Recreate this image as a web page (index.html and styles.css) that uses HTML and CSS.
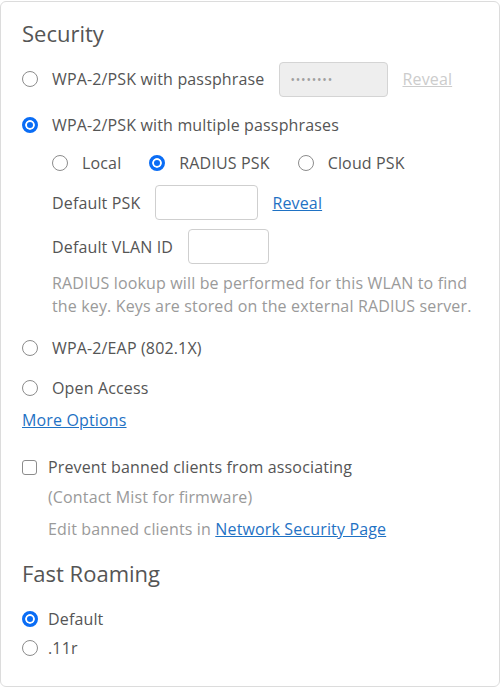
FILE: index.html
```html
<!DOCTYPE html>
<html>
<head>
<meta charset="utf-8">
<link rel="stylesheet" href="styles.css">
</head>
<body>
<div class="panel">
  <h2 class="title">Security</h2>

  <div class="row r1">
    <span class="radio"></span><span class="label">WPA-2/PSK with passphrase</span>
    <span class="input disabled pass">••••••••</span>
    <a class="link off">Reveal</a>
  </div>

  <div class="row r2">
    <span class="radio on"></span><span class="label">WPA-2/PSK with multiple passphrases</span>
  </div>

  <div class="sub">
    <div class="row r3">
      <span class="opt"><span class="radio"></span><span class="label">Local</span></span>
      <span class="opt"><span class="radio on"></span><span class="label">RADIUS PSK</span></span>
      <span class="opt"><span class="radio"></span><span class="label">Cloud PSK</span></span>
    </div>
    <div class="row r4">
      <span class="flabel">Default PSK</span>
      <span class="input psk"></span>
      <a class="link">Reveal</a>
    </div>
    <div class="row r5">
      <span class="flabel">Default VLAN ID</span>
      <span class="input vlan"></span>
    </div>
    <p class="help">RADIUS lookup will be performed for this WLAN to find the key. Keys are stored on the external RADIUS server.</p>
  </div>

  <div class="row r6">
    <span class="radio"></span><span class="label">WPA-2/EAP (802.1X)</span>
  </div>
  <div class="row r7">
    <span class="radio"></span><span class="label">Open Access</span>
  </div>
  <div class="row r8"><a class="link">More Options</a></div>

  <div class="row r9">
    <span class="check"></span><span class="label">Prevent banned clients from associating</span>
  </div>
  <div class="row r10 note">(Contact Mist for firmware)</div>
  <div class="row r11 note">Edit banned clients in&nbsp;<a class="link">Network Security Page</a></div>

  <h2 class="title t2">Fast Roaming</h2>
  <div class="row r12">
    <span class="radio on"></span><span class="label tight">Default</span>
  </div>
  <div class="row r13">
    <span class="radio"></span><span class="label tight">.11r</span>
  </div>
</div>
</body>
</html>
```

FILE: styles.css
```css
html, body {
  margin: 0;
  padding: 0;
  background: #ffffff;
}
body {
  padding-top: 1px;
  font-family: "Open Sans", "Liberation Sans", sans-serif;
  color: #555555;
  font-size: 16px;
  letter-spacing: 0.15px;
}
.panel {
  box-sizing: border-box;
  width: 500px;
  height: 686px;
  border: 1px solid #dcdcdc;
  border-radius: 6px;
  padding: 16px 0 0 21px;
  display: flex;
  flex-direction: column;
}
.title {
  margin: 0;
  font-size: 22px;
  font-weight: 400;
  letter-spacing: 0;
  line-height: 30px;
  height: 30px;
  color: #555555;
}
.row {
  display: flex;
  align-items: center;
  height: 24px;
  line-height: 24px;
  white-space: nowrap;
}
.radio {
  box-sizing: border-box;
  width: 16px;
  height: 16px;
  border-radius: 50%;
  border: 1.5px solid #8c8c8c;
  background: #fff;
  flex: none;
}
.radio.on {
  border: 3px solid #0a6df5;
  background: #0a6df5;
  box-shadow: inset 0 0 0 2px #fff;
}
.check {
  box-sizing: border-box;
  width: 15px;
  height: 15px;
  border-radius: 3px;
  border: 1.5px solid #8c8c8c;
  background: #fff;
  flex: none;
}
.label { margin-left: 14px; }
.r9 .label { margin-left: 11px; }
.label.tight { margin-left: 10px; }
.input {
  box-sizing: border-box;
  height: 35px;
  border: 1px solid #cfcfcf;
  border-radius: 4px;
  background: #fff;
  flex: none;
}
.input.disabled {
  background: #eeeeee;
  border-color: #d4d4d4;
}
.pass {
  width: 109px;
  margin-left: 15px;
  padding-left: 10px;
  font-size: 12px;
  color: #a0a0a0;
  letter-spacing: 0.8px;
  line-height: 33px;
}
.link {
  color: #1f72c4;
  text-decoration: underline;
  cursor: pointer;
}
.link.off { color: #cccccc; }
.r1 { height: 36px; margin-top: 13px; }
.r1 .link { margin-left: 14px; }
.r2 { margin-top: 16px; }
.sub { padding-left: 30px; display: flex; flex-direction: column; }
.r3 { margin-top: 14px; }
.opt { display: flex; align-items: center; margin-right: 28px; }
.opt .label { margin-left: 14px; }
.r4 { height: 35px; margin-top: 10px; }
.r5 { height: 35px; margin-top: 9px; }
.flabel { margin-right: 15px; }
.psk { width: 103px; }
.r4 .link { margin-left: 14px; }
.vlan { width: 81px; }
.help {
  margin: 8px 0 0 0;
  width: 430px;
  line-height: 23px;
  color: #9a9a9a;
}
.r6 { margin-top: 18px; }
.r7 { margin-top: 16px; }
.r8 { margin-top: 8px; }
.r9 { margin-top: 23px; }
.note { color: #9a9a9a; padding-left: 26px; }
.r10 { margin-top: 6px; }
.r11 { margin-top: 8px; }
.t2 { margin-top: 17px; }
.r12 { margin-top: 19px; }
.r13 { margin-top: 5px; }
```
